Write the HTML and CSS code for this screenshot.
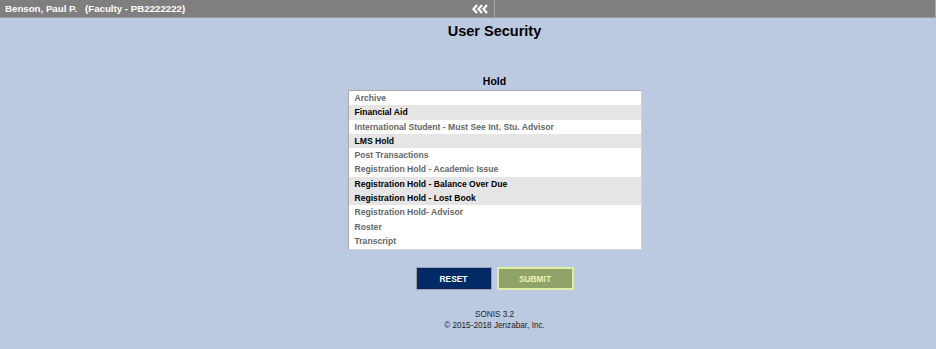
FILE: index.html
```html
<!DOCTYPE html>
<html lang="en">
<head>
    <meta charset="UTF-8">
    <title>User Security</title>
    <link rel="stylesheet" href="styles.css">
</head>
<body>
    <div class="topbar">
        <div class="topbar-left">
            <span class="user">Benson, Paul P.&nbsp;&nbsp;&nbsp;(Faculty - PB2222222)</span>
            <svg class="collapse" width="17" height="10" viewBox="0 0 17 10">
                <polyline points="5,1 1.5,5 5,9" />
                <polyline points="10,1 6.5,5 10,9" />
                <polyline points="15,1 11.5,5 15,9" />
            </svg>
        </div>
        <div class="topbar-right"></div>
    </div>

    <div class="main">
        <h1>User Security</h1>

        <div class="hold">
            <div class="hold-label">Hold</div>
            <div class="hold-list">
                <div class="item">Archive</div>
                <div class="item selected">Financial Aid</div>
                <div class="item">International Student - Must See Int. Stu. Advisor</div>
                <div class="item selected">LMS Hold</div>
                <div class="item">Post Transactions</div>
                <div class="item">Registration Hold - Academic Issue</div>
                <div class="item selected">Registration Hold - Balance Over Due</div>
                <div class="item selected">Registration Hold - Lost Book</div>
                <div class="item">Registration Hold- Advisor</div>
                <div class="item">Roster</div>
                <div class="item">Transcript</div>
            </div>
        </div>

        <div class="buttons">
            <button class="btn reset">RESET</button>
            <button class="btn submit">SUBMIT</button>
        </div>

        <div class="footer">
            SONIS 3.2<br>
            &copy; 2015-2018 Jenzabar, Inc.
        </div>
    </div>
</body>
</html>
```

FILE: styles.css
```css
body {
    margin: 0;
    background-color: #bccae1;
    font-family: "Liberation Sans", Arial, sans-serif;
    color: #000;
}

.topbar {
    display: flex;
    height: 18px;
    background-color: #7f7f7f;
    border-bottom: 1px solid #9a9a9a;
    box-sizing: border-box;
}

.topbar-left {
    width: 495px;
    display: flex;
    align-items: center;
    justify-content: space-between;
    border-right: 1px solid #a8a8a8;
    padding-left: 5px;
    box-sizing: border-box;
}

.user {
    color: #fff;
    font-weight: bold;
    font-size: 9.7px;
}

.collapse {
    margin-right: 5px;
    fill: none;
    stroke: #fff;
    stroke-width: 2.2;
}

.topbar-right {
    flex: 1;
    border-right: 1px solid #a8a8a8;
}

.main {
    padding-left: 53px;
    display: flex;
    flex-direction: column;
    align-items: center;
}

h1 {
    margin: 5px 0 0;
    font-size: 14.5px;
    font-weight: bold;
}

.hold {
    margin-top: 36px;
    display: flex;
    flex-direction: column;
    align-items: center;
}

.hold-label {
    font-size: 10.5px;
    font-weight: bold;
    margin-bottom: 3px;
}

.hold-list {
    width: 292px;
    background-color: #fff;
    border: 1px solid #a9a9a9;
    border-right-color: #d4d4d4;
    border-bottom-color: #d4d4d4;
    padding: 0 0 1px;
}

.item {
    height: 14.3px;
    line-height: 14.3px;
    padding-left: 6px;
    font-size: 8.6px;
    font-weight: bold;
    color: #666;
    white-space: nowrap;
}

.item.selected {
    background-color: #e5e5e5;
    color: #000;
}

.buttons {
    margin-top: 17px;
    display: flex;
    gap: 5px;
}

.btn {
    width: 76px;
    height: 23px;
    font-family: "Liberation Sans", Arial, sans-serif;
    font-size: 8.4px;
    font-weight: bold;
    padding: 0;
    box-sizing: border-box;
}

.reset {
    background-color: #012a66;
    color: #fff;
    border: 1px solid #9aa3b3;
    box-shadow: inset 0 0 0 1px #08245a;
}

.submit {
    width: 77px;
    background-color: #8fa36b;
    color: #eef5b0;
    border: 2px solid #dfeea0;
}

.footer {
    margin-top: 19px;
    font-size: 8.2px;
    line-height: 11px;
    text-align: center;
    color: #222;
}
```
